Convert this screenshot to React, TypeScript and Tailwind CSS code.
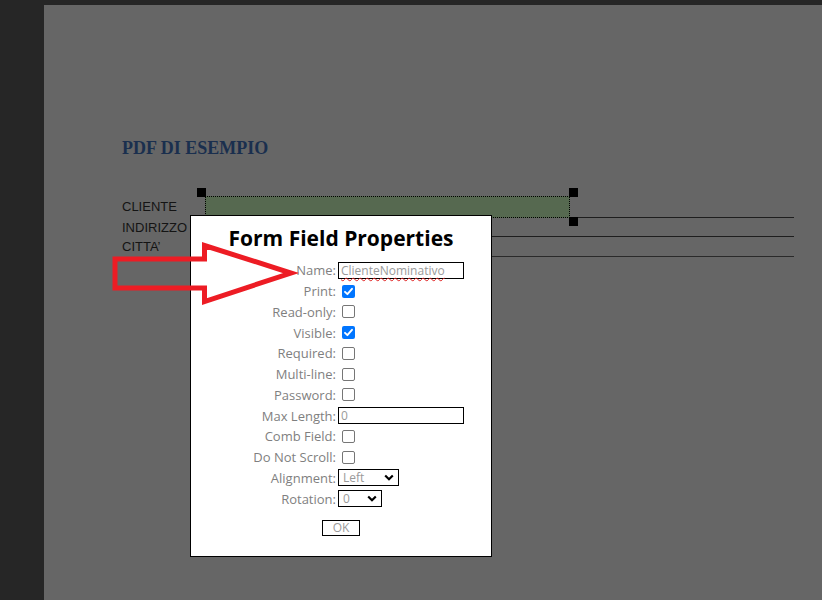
import React from 'react';

const FONT = { fontFamily: '"Open Sans", "Liberation Sans", sans-serif' };

type Row =
  | { label: string; kind: 'text'; value: string; spell?: boolean }
  | { label: string; kind: 'check'; checked?: boolean }
  | { label: string; kind: 'select'; value: string; width: string };

const ROWS: Row[] = [
  { label: 'Name:', kind: 'text', value: 'ClienteNominativo', spell: true },
  { label: 'Print:', kind: 'check', checked: true },
  { label: 'Read-only:', kind: 'check' },
  { label: 'Visible:', kind: 'check', checked: true },
  { label: 'Required:', kind: 'check' },
  { label: 'Multi-line:', kind: 'check' },
  { label: 'Password:', kind: 'check' },
  { label: 'Max Length:', kind: 'text', value: '0' },
  { label: 'Comb Field:', kind: 'check' },
  { label: 'Do Not Scroll:', kind: 'check' },
  { label: 'Alignment:', kind: 'select', value: 'Left', width: 'w-[61px]' },
  { label: 'Rotation:', kind: 'select', value: '0', width: 'w-[44px]' },
];

function Check({ checked }: { checked?: boolean }) {
  if (checked) {
    return (
      <span className="ml-[4px] w-[13px] h-[13px] rounded-[2px] bg-[#0075ff] flex items-center justify-center">
        <svg width="11" height="11" viewBox="0 0 11 11">
          <path d="M2 5.8 L4.4 8.2 L9 2.8" fill="none" stroke="white" strokeWidth="1.9" strokeLinecap="round" strokeLinejoin="round" />
        </svg>
      </span>
    );
  }
  return <span className="ml-[4px] w-[13px] h-[13px] rounded-[2px] border border-[#767676] bg-white" />;
}

function Control({ row }: { row: Row }) {
  if (row.kind === 'check') return <Check checked={row.checked} />;
  if (row.kind === 'text') {
    return (
      <div className="w-[126px] h-[17px] border border-black flex items-center pl-[2px] text-[12px] leading-[15px] text-[#9a9a9a]">
        <span className={row.spell ? 'underline decoration-wavy decoration-[#e02020] decoration-1 underline-offset-2' : ''}>
          {row.value}
        </span>
      </div>
    );
  }
  return (
    <div className={`${row.width} h-[17px] border border-black flex items-center justify-between pl-[4px] pr-[4px] text-[12px] leading-[15px] text-[#9a9a9a]`}>
      <span>{row.value}</span>
      <svg width="10" height="7" viewBox="0 0 10 7">
        <path d="M1.2 1.5 L5 5.2 L8.8 1.5" fill="none" stroke="black" strokeWidth="2.2" />
      </svg>
    </div>
  );
}

function Dialog() {
  return (
    <div className="absolute left-[146px] top-[210px] w-[302px] h-[342px] border border-black bg-white" style={FONT}>
      <div className="pt-[9px] text-center text-[21px] font-bold leading-[27px] text-black">Form Field Properties</div>
      <div className="mt-[8px]">
        {ROWS.map((r) => (
          <div key={r.label} className="flex items-center h-[20.75px]">
            <div className="w-[145px] text-right text-[13px] leading-[18px] text-[#7f7f7f]">{r.label}</div>
            <div className="ml-[2px] flex items-center">
              <Control row={r} />
            </div>
          </div>
        ))}
      </div>
      <div className="mt-[11px] flex justify-center">
        <button className="w-[38px] h-[16px] border border-black text-[12px] leading-[14px] text-[#9a9a9a]">OK</button>
      </div>
    </div>
  );
}

function Handle({ className }: { className: string }) {
  return <span className={`absolute w-[9px] h-[9px] bg-black ${className}`} />;
}

function Document() {
  const lbl = 'w-[83px] text-[13px] leading-[18px] text-[#141414]';
  return (
    <div className="pl-[78px] pr-[28px]" style={{ fontFamily: '"Liberation Sans", Arial, sans-serif' }}>
      <div
        className="pt-[131px] text-[18px] leading-[24px] font-bold text-[#1a2f4e]"
        style={{ fontFamily: '"Liberation Serif", "DejaVu Serif", serif' }}
      >
        PDF DI ESEMPIO
      </div>
      <div className="mt-[36px]">
        <div className="flex items-center h-[22px]">
          <div className={lbl}>CLIENTE</div>
          <div className="flex-1 h-full border-b border-[#1e1e1e] relative">
            <div className="absolute left-0 top-0 w-[365px] h-[22px] border border-dotted border-black bg-[#566950]" />
            <Handle className="left-[-8px] top-[-8px]" />
            <Handle className="left-[364px] top-[-8px]" />
            <Handle className="left-[364px] top-[21px]" />
          </div>
        </div>
        <div className="flex items-center h-[19px]">
          <div className={lbl}>INDIRIZZO</div>
          <div className="flex-1 h-full border-b border-[#1e1e1e]" />
        </div>
        <div className="flex items-center h-[20px]">
          <div className={lbl}>CITTA’</div>
          <div className="flex-1 h-full border-b border-[#2a2a2a]" />
        </div>
      </div>
    </div>
  );
}

export default function App() {
  return (
    <div className="relative w-[822px] h-[600px] bg-[#262626] overflow-hidden">
      <div className="absolute left-[44px] top-[5px] right-0 bottom-0 bg-[#666666]">
        <Document />
        <Dialog />
      </div>
      <svg className="absolute left-0 top-0 pointer-events-none" width="822" height="600">
        <polygon
          points="115,259 204.5,259 204.5,245.5 291,273 204.5,301.5 204.5,288 115,288"
          fill="none"
          stroke="#ed1c24"
          strokeWidth="5"
          strokeLinejoin="miter"
        />
      </svg>
    </div>
  );
}
